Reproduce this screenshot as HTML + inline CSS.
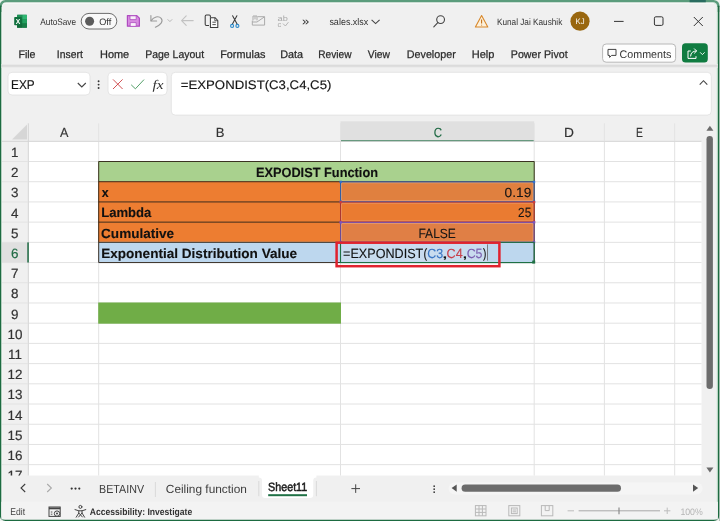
<!DOCTYPE html>
<html lang="en"><head><meta charset="utf-8"><title>sales.xlsx - Excel</title>
<style>html,body{margin:0;padding:0;background:#f4f8f5;overflow:hidden}svg{display:block;will-change:transform}</style>
</head><body>
<svg width="720" height="521" viewBox="0 0 720 521" font-family="'Liberation Sans', sans-serif" text-rendering="geometricPrecision">
<rect x="0" y="0" width="720" height="521" fill="#eef3ef"/>
<rect x="719.2" y="6" width="0.8" height="515" fill="#a9bbb0"/>
<rect x="0" y="0" width="719.2" height="521" rx="5.5" ry="5.5" fill="#f0f0f0"/>
<path d="M1.7 519 V6.5 Q1.7 3.2 5 3.2 H714" fill="none" stroke="#f7fbf8" stroke-width="1"/>
<path d="M714 3.2 Q717 3.2 717 6.5 V517" fill="none" stroke="#d9eee1" stroke-width="1.1"/>
<path d="M0.6 6 V515.5 Q0.6 520.2 5.5 520.2 H713.6 Q718.5 520.2 718.5 515.5 V6" fill="none" stroke="#1d6b41" stroke-width="1.4"/>
<path d="M0.6 7 Q0.6 1.1 6.4 1.1 H712.8 Q718.5 1.1 718.5 7" fill="none" stroke="#5b9c7c" stroke-width="2.3"/>
<path d="M0.6 5.6 V12" fill="none" stroke="#1d6b41" stroke-width="1.4"/>
<path d="M718.5 5.6 V12" fill="none" stroke="#1d6b41" stroke-width="1.4"/>
<path d="M689.6 1.1 H705.8" stroke="#2a6c60" stroke-width="2.3" fill="none"/>
<g><rect x="17" y="14.8" width="10" height="12.9" rx="0.9" fill="#178048"/><rect x="17" y="14.8" width="5.4" height="4.3" fill="#1e9156"/><rect x="22.4" y="14.8" width="4.6" height="4.3" fill="#30b572"/><rect x="22.4" y="19.1" width="4.6" height="4.3" fill="#22a05f"/><rect x="17" y="23.4" width="5.4" height="4.3" fill="#126a3a"/><rect x="22.4" y="23.4" width="4.6" height="4.3" fill="#187d47"/><rect x="14.2" y="17" width="7.6" height="8.3" rx="0.8" fill="#0f6f3d"/></g>
<text x="15.75" y="23.9" font-size="7.4" fill="#fff" font-weight="bold" textLength="4.55" lengthAdjust="spacingAndGlyphs">X</text>
<text x="40.3" y="25" font-size="9.4" fill="#333" textLength="35.78" lengthAdjust="spacingAndGlyphs">AutoSave</text>
<rect x="81.2" y="13.4" width="35.6" height="15.6" rx="7.8" fill="#f9f9f9" stroke="#5e5e5e" stroke-width="0.9"/>
<circle cx="89.6" cy="21.2" r="4.5" fill="#5c5c5c"/>
<text x="99.21" y="25" font-size="9.4" fill="#333" textLength="12.0" lengthAdjust="spacingAndGlyphs">Off</text>
<g stroke-linejoin="round"><path d="M127.4 15.6 H136.8 L139.4 18.2 V26.2 H127.4 Z" fill="#d78be0" stroke="#ae4bc0" stroke-width="1.2"/><rect x="130" y="15.8" width="6.2" height="3.8" fill="#f7eef8" stroke="#ae4bc0" stroke-width="0.8"/><rect x="130.2" y="22.6" width="6" height="3.8" fill="#faf3fb" stroke="#ae4bc0" stroke-width="0.8"/></g>
<g fill="none" stroke="#9a9a9a" stroke-width="1.1" stroke-linecap="round" stroke-linejoin="round"><path d="M150.9 15.6 V21 H156.6"/><path d="M151.2 20.6 C153.4 16.8 158.6 15.4 161.2 18.4 C163.6 21.6 160.6 24.8 155.4 27.2"/><path d="M167.9 19.6 L169.9 21.6 L171.9 19.6" stroke="#b0b0b0" stroke-width="0.9"/></g>
<g fill="none" stroke="#c2c2c2" stroke-width="1.1" stroke-linecap="round" stroke-linejoin="round"><path d="M181.6 20.6 H193.2 M186.2 15.9 L181.6 20.6 L186.2 25.3"/></g>
<g fill="none" stroke="#3b3b3b" stroke-width="1.05" stroke-linejoin="round"><path d="M209 25.4 H206.4 Q205.2 25.4 205.2 24.2 V16.2 Q205.2 15 206.4 15 H209.2 Q210.4 15 210.4 16.2 V17.4"/><path d="M210.4 17.7 H215 L217.8 20.5 V27.5 H210.4 Z" fill="#fbfbfb"/><path d="M214.8 17.9 V20.7 H217.6" stroke-width="0.8"/><path d="M212.4 22.2 H215.8 M212.4 24.6 H215.8" stroke-width="0.9"/></g>
<g fill="none" stroke-linecap="round"><path d="M232.6 15.8 L237.2 24.2 M236.9 15.8 L232.3 24.2" stroke="#3b3b3b" stroke-width="1.05"/><circle cx="232.1" cy="25.9" r="1.5" stroke="#2b88c8" stroke-width="1.1"/><circle cx="237.4" cy="25.9" r="1.5" stroke="#2b88c8" stroke-width="1.1"/></g>
<g fill="none" stroke="#ababab" stroke-width="1"><path d="M257.6 16.7 H264.6 V25.1 H252.3 V20.6"/><path d="M252.3 22 H257 L264.4 16.9"/><path d="M253 20.4 V16 H257 V20.4 M255 16.2 V19.4"/></g>
<text x="277.6" y="20.6" font-size="7.6" fill="#a8a8a8" textLength="10.2" lengthAdjust="spacingAndGlyphs">ab</text>
<text x="277.6" y="27.2" font-size="7.6" fill="#a8a8a8">c</text>
<path d="M283 23.6 L285.4 26 L288.4 22.2" fill="none" stroke="#b5b5b5" stroke-width="1"/>
<text x="301.94" y="25.2" font-size="11.5" fill="#333" textLength="7.22" lengthAdjust="spacingAndGlyphs">»</text>
<text x="329.39" y="25" font-size="9.6" fill="#333" textLength="39.0" lengthAdjust="spacingAndGlyphs">sales.xlsx</text>
<path d="M371.6 19.8 L375.6 23.6 L379.6 19.8" fill="none" stroke="#444" stroke-width="1.1"/>
<g fill="none" stroke="#444" stroke-width="1.1" stroke-linecap="round"><circle cx="440.6" cy="19.6" r="3.9"/><path d="M437.8 22.6 L433.8 26.8"/></g>
<path d="M481.6 15.6 L487.8 27 H475.4 Z" fill="#fdf1dc" stroke="#d8872a" stroke-width="1.1" stroke-linejoin="round"/>
<path d="M481.6 19.4 V23.4 M481.6 24.8 V25.6" stroke="#c4701a" stroke-width="1.1"/>
<text x="496.96" y="24.8" font-size="9.2" fill="#333" textLength="65.29" lengthAdjust="spacingAndGlyphs">Kunal Jai Kaushik</text>
<circle cx="580" cy="21.2" r="9.6" fill="#99670f"/>
<text x="575.56" y="24.2" font-size="8" fill="#fff" textLength="9.04" lengthAdjust="spacingAndGlyphs">KJ</text>
<g fill="none" stroke="#333" stroke-width="1"><path d="M614 21.4 H623.6"/><rect x="654.4" y="16.8" width="8.6" height="8.6" rx="1.4"/><path d="M693.8 17 L702.8 26 M702.8 17 L693.8 26"/></g>
<text x="18.39" y="58.1" font-size="11" fill="#2b2b2b" textLength="17.16" lengthAdjust="spacingAndGlyphs" stroke="#2b2b2b" stroke-width="0.25">File</text>
<text x="56.86" y="58.1" font-size="11" fill="#2b2b2b" textLength="25.96" lengthAdjust="spacingAndGlyphs" stroke="#2b2b2b" stroke-width="0.25">Insert</text>
<text x="99.97" y="58.1" font-size="11" fill="#2b2b2b" textLength="29.24" lengthAdjust="spacingAndGlyphs" stroke="#2b2b2b" stroke-width="0.25">Home</text>
<text x="145.21" y="58.1" font-size="11" fill="#2b2b2b" textLength="58.9" lengthAdjust="spacingAndGlyphs" stroke="#2b2b2b" stroke-width="0.25">Page Layout</text>
<text x="220.18" y="58.1" font-size="11" fill="#2b2b2b" textLength="45.16" lengthAdjust="spacingAndGlyphs" stroke="#2b2b2b" stroke-width="0.25">Formulas</text>
<text x="280.18" y="58.1" font-size="11" fill="#2b2b2b" textLength="22.9" lengthAdjust="spacingAndGlyphs" stroke="#2b2b2b" stroke-width="0.25">Data</text>
<text x="318.23" y="58.1" font-size="11" fill="#2b2b2b" textLength="33.34" lengthAdjust="spacingAndGlyphs" stroke="#2b2b2b" stroke-width="0.25">Review</text>
<text x="367.84" y="58.1" font-size="11" fill="#2b2b2b" textLength="22.15" lengthAdjust="spacingAndGlyphs" stroke="#2b2b2b" stroke-width="0.25">View</text>
<text x="406.79" y="58.1" font-size="11" fill="#2b2b2b" textLength="48.95" lengthAdjust="spacingAndGlyphs" stroke="#2b2b2b" stroke-width="0.25">Developer</text>
<text x="471.76" y="58.1" font-size="11" fill="#2b2b2b" textLength="22.7" lengthAdjust="spacingAndGlyphs" stroke="#2b2b2b" stroke-width="0.25">Help</text>
<text x="510.79" y="58.1" font-size="11" fill="#2b2b2b" textLength="56.84" lengthAdjust="spacingAndGlyphs" stroke="#2b2b2b" stroke-width="0.25">Power Pivot</text>
<rect x="602.6" y="44" width="73" height="18.2" rx="3.5" fill="#fdfdfd" stroke="#b8b8b8" stroke-width="1"/>
<path d="M608 49.4 H616 V55.4 H611.6 L609.6 57.4 V55.4 H608 Z" fill="none" stroke="#444" stroke-width="1" stroke-linejoin="round"/>
<text x="619.51" y="57.6" font-size="11" fill="#333" textLength="51.83" lengthAdjust="spacingAndGlyphs">Comments</text>
<rect x="682" y="43.2" width="25.8" height="19.3" rx="3.5" fill="#107c41"/>
<g fill="none" stroke="#fff" stroke-width="1" stroke-linejoin="round" stroke-linecap="round"><path d="M690.4 51 H688 V58.4 H696 V56.6"/><path d="M690.6 56 C690.8 52.6 693 51 696.4 51 M694.4 48.8 L696.6 51 L694.4 53.2"/><path d="M700.4 52.6 L702.4 54.6 L704.4 52.6" stroke-width="0.9"/></g>
<rect x="1.4" y="64" width="716.4" height="1" fill="#e9e9e9"/>
<rect x="1.4" y="65" width="716.4" height="1.9" fill="#dbdbdb"/>
<rect x="1.4" y="66.9" width="716.4" height="0.9" fill="#eaeaea"/>
<rect x="8" y="72.3" width="82" height="22.7" rx="4" fill="#fff" stroke="#e0e0e0" stroke-width="0.8"/>
<text x="11.06" y="89.4" font-size="12.6" fill="#151515" textLength="23.59" lengthAdjust="spacingAndGlyphs" stroke="#151515" stroke-width="0.15">EXP</text>
<path d="M77.8 83 L81.8 87 L85.8 83" fill="none" stroke="#444" stroke-width="1.1"/>
<circle cx="98.6" cy="81.2" r="0.95" fill="#333"/>
<circle cx="98.6" cy="84.6" r="0.95" fill="#333"/>
<circle cx="98.6" cy="88" r="0.95" fill="#333"/>
<rect x="108" y="72.3" width="59" height="22.7" rx="4" fill="#fff" stroke="#e0e0e0" stroke-width="0.8"/>
<path d="M113 79.4 L122.6 89 M122.6 79.4 L113 89" stroke="#cf4a4c" stroke-width="0.95" fill="none"/>
<path d="M131.2 84.8 L135.4 88.8 L144 79.6" stroke="#4a9a60" stroke-width="0.95" fill="none"/>
<text x="152.6" y="89" font-size="13" fill="#333" textLength="11" lengthAdjust="spacingAndGlyphs" font-style="italic" font-family="'Liberation Serif', serif">fx</text>
<rect x="171.3" y="72.3" width="540" height="42.8" rx="4" fill="#fff" stroke="#e0e0e0" stroke-width="0.8"/>
<text x="180.79" y="89.2" font-size="12.4" fill="#151515" textLength="150.6" lengthAdjust="spacingAndGlyphs" stroke="#151515" stroke-width="0.15">=EXPONDIST(C3,C4,C5)</text>
<path d="M699.7 84.7 L703.5 80.7 L707.3 84.7" fill="none" stroke="#444" stroke-width="1.1"/>
<rect x="28.3" y="141.3" width="673.2" height="334.2" fill="#fff"/>
<rect x="340.5" y="121.3" width="193.70000000000005" height="20.000000000000014" fill="#e0e0e0"/>
<rect x="340.5" y="140.0" width="193.70000000000005" height="1.6" fill="#4d8a6a"/>
<rect x="2" y="242.35000000000002" width="26.3" height="20.21" fill="#e0e0e0"/>
<path d="M28.3 161.51 H701.5 M28.3 181.72 H701.5 M28.3 201.93 H701.5 M28.3 222.14 H701.5 M28.3 242.35 H701.5 M28.3 262.56 H701.5 M28.3 282.77 H701.5 M28.3 302.98 H701.5 M28.3 323.19 H701.5 M28.3 343.4 H701.5 M28.3 363.61 H701.5 M28.3 383.82 H701.5 M28.3 404.03 H701.5 M28.3 424.24 H701.5 M28.3 444.45 H701.5 M28.3 464.66 H701.5 M98.7 141.3 V475.5 M340.5 141.3 V475.5 M534.2 141.3 V475.5 M604.4 141.3 V475.5 M674.7 141.3 V475.5" stroke="#e2e2e2" stroke-width="1" fill="none"/>
<path d="M28.3 123.3 V475.5 M2 141.3 H701.5" stroke="#d4d4d4" stroke-width="1" fill="none"/>
<path d="M98.7 123.3 V141.3 M340.5 123.3 V141.3 M534.2 123.3 V141.3 M604.4 123.3 V141.3 M674.7 123.3 V141.3 M2 161.51 H28.3 M2 181.72 H28.3 M2 201.93 H28.3 M2 222.14 H28.3 M2 242.35 H28.3 M2 262.56 H28.3 M2 282.77 H28.3 M2 302.98 H28.3 M2 323.19 H28.3 M2 343.4 H28.3 M2 363.61 H28.3 M2 383.82 H28.3 M2 404.03 H28.3 M2 424.24 H28.3 M2 444.45 H28.3 M2 464.66 H28.3" stroke="#e3e3e3" stroke-width="1" fill="none"/>
<rect x="27.3" y="242.35000000000002" width="1.5" height="20.21" fill="#1f6a44"/>
<path d="M27 124.4 V139.4 H12 Z" fill="#d6d6d6"/>
<text x="60.0" y="136.5" font-size="13.2" fill="#333" textLength="8.42" lengthAdjust="spacingAndGlyphs" stroke="#333" stroke-width="0.15">A</text>
<text x="215.64" y="136.5" font-size="13.2" fill="#333" textLength="8.73" lengthAdjust="spacingAndGlyphs" stroke="#333" stroke-width="0.15">B</text>
<text x="433.82" y="136.5" font-size="13.2" fill="#1f6a44" textLength="8.35" lengthAdjust="spacingAndGlyphs" stroke="#1f6a44" stroke-width="0.15">C</text>
<text x="564.08" y="136.5" font-size="13.2" fill="#333" textLength="9.95" lengthAdjust="spacingAndGlyphs" stroke="#333" stroke-width="0.15">D</text>
<text x="636.08" y="136.5" font-size="13.2" fill="#333" textLength="6.91" lengthAdjust="spacingAndGlyphs" stroke="#333" stroke-width="0.15">E</text>
<clipPath id="gc"><rect x="0" y="121.3" width="701.5" height="354.2"/></clipPath>
<g clip-path="url(#gc)">
<text x="14.8" y="156.9" font-size="13.4" fill="#333" text-anchor="middle" stroke="#333" stroke-width="0.2">1</text>
<text x="14.8" y="177.1" font-size="13.4" fill="#333" text-anchor="middle" stroke="#333" stroke-width="0.2">2</text>
<text x="14.8" y="197.3" font-size="13.4" fill="#333" text-anchor="middle" stroke="#333" stroke-width="0.2">3</text>
<text x="14.8" y="217.5" font-size="13.4" fill="#333" text-anchor="middle" stroke="#333" stroke-width="0.2">4</text>
<text x="14.8" y="237.7" font-size="13.4" fill="#333" text-anchor="middle" stroke="#333" stroke-width="0.2">5</text>
<text x="14.8" y="258.0" font-size="13.4" fill="#1f6a44" text-anchor="middle" stroke="#1f6a44" stroke-width="0.2">6</text>
<text x="14.8" y="278.2" font-size="13.4" fill="#333" text-anchor="middle" stroke="#333" stroke-width="0.2">7</text>
<text x="14.8" y="298.4" font-size="13.4" fill="#333" text-anchor="middle" stroke="#333" stroke-width="0.2">8</text>
<text x="14.8" y="318.6" font-size="13.4" fill="#333" text-anchor="middle" stroke="#333" stroke-width="0.2">9</text>
<text x="15" y="338.8" font-size="13.4" fill="#333" text-anchor="middle" stroke="#333" stroke-width="0.2">10</text>
<text x="15" y="359.0" font-size="13.4" fill="#333" text-anchor="middle" stroke="#333" stroke-width="0.2">11</text>
<text x="15" y="379.2" font-size="13.4" fill="#333" text-anchor="middle" stroke="#333" stroke-width="0.2">12</text>
<text x="15" y="399.4" font-size="13.4" fill="#333" text-anchor="middle" stroke="#333" stroke-width="0.2">13</text>
<text x="15" y="419.6" font-size="13.4" fill="#333" text-anchor="middle" stroke="#333" stroke-width="0.2">14</text>
<text x="15" y="439.8" font-size="13.4" fill="#333" text-anchor="middle" stroke="#333" stroke-width="0.2">15</text>
<text x="15" y="460.1" font-size="13.4" fill="#333" text-anchor="middle" stroke="#333" stroke-width="0.2">16</text>
<text x="15" y="480.3" font-size="13.4" fill="#333" text-anchor="middle" stroke="#333" stroke-width="0.2">17</text>
</g>
<rect x="98.2" y="161.01" width="436.5" height="21.21" fill="#a9d18e"/>
<rect x="98.2" y="181.22" width="242.8" height="21.21" fill="#ed7d31"/>
<rect x="340.0" y="181.22" width="194.7" height="21.21" fill="#e0803f"/>
<rect x="98.2" y="201.43" width="242.8" height="21.21" fill="#ed7d31"/>
<rect x="340.0" y="201.43" width="194.7" height="21.21" fill="#ea7b31"/>
<rect x="98.2" y="221.64" width="242.8" height="21.21" fill="#ed7d31"/>
<rect x="340.0" y="221.64" width="194.7" height="21.21" fill="#e07f45"/>
<rect x="98.2" y="241.85" width="242.8" height="21.21" fill="#bdd7ee"/>
<rect x="340.0" y="241.85" width="194.7" height="21.21" fill="#bdd7ee"/>
<rect x="341.5" y="243.35" width="146" height="18.21" fill="#c9dcef"/>
<rect x="98.2" y="302.48" width="242.8" height="21.21" fill="#70ad47"/>
<path d="M98.7 161.51 H534.2 M98.7 181.72 H534.2 M98.7 201.93 H534.2 M98.7 222.14 H534.2 M98.7 242.35 H534.2 M98.7 262.56 H534.2 M98.7 161.51 V262.56 M534.2 161.51 V262.56 M340.5 181.72 V262.56" stroke="#35291c" stroke-width="0.95" fill="none"/>
<rect x="340.7" y="181.92" width="193.3" height="19.81" fill="none" stroke="#2f6fd0" stroke-width="0.9"/>
<rect x="341.7" y="182.92" width="191.3" height="17.81" fill="none" stroke="#f3e6dc" stroke-width="0.6" opacity="0.4"/>
<rect x="339.5" y="180.72" width="2.4" height="2.4" fill="#2f6fd0"/>
<rect x="532.8" y="180.72" width="2.4" height="2.4" fill="#2f6fd0"/>
<rect x="339.5" y="200.53" width="2.4" height="2.4" fill="#2f6fd0"/>
<rect x="532.8" y="200.53" width="2.4" height="2.4" fill="#2f6fd0"/>
<rect x="340.7" y="202.13" width="193.3" height="19.81" fill="none" stroke="#d03a3a" stroke-width="0.9"/>
<rect x="341.7" y="203.13" width="191.3" height="17.81" fill="none" stroke="#f3e6dc" stroke-width="0.6" opacity="0.4"/>
<rect x="339.5" y="200.93" width="2.4" height="2.4" fill="#d03a3a"/>
<rect x="532.8" y="200.93" width="2.4" height="2.4" fill="#d03a3a"/>
<rect x="339.5" y="220.74" width="2.4" height="2.4" fill="#d03a3a"/>
<rect x="532.8" y="220.74" width="2.4" height="2.4" fill="#d03a3a"/>
<rect x="340.7" y="222.34" width="193.3" height="19.81" fill="none" stroke="#7a55c0" stroke-width="0.9"/>
<rect x="341.7" y="223.34" width="191.3" height="17.81" fill="none" stroke="#f3e6dc" stroke-width="0.6" opacity="0.4"/>
<rect x="339.5" y="221.14" width="2.4" height="2.4" fill="#7a55c0"/>
<rect x="532.8" y="221.14" width="2.4" height="2.4" fill="#7a55c0"/>
<rect x="339.5" y="240.95" width="2.4" height="2.4" fill="#7a55c0"/>
<rect x="532.8" y="240.95" width="2.4" height="2.4" fill="#7a55c0"/>
<rect x="340.5" y="242.35" width="193.70000000000005" height="20.21" fill="none" stroke="#1f7145" stroke-width="1.1"/>
<rect x="532.2" y="260.56" width="3" height="3" fill="#1f7145"/>
<text x="255.9" y="177.0" font-size="13.3" fill="#111" font-weight="bold" textLength="122.1" lengthAdjust="spacingAndGlyphs" stroke="#111" stroke-width="0.12">EXPODIST Function</text>
<text x="101.85" y="197.2" font-size="13.3" fill="#111" font-weight="bold" textLength="6.88" lengthAdjust="spacingAndGlyphs" stroke="#111" stroke-width="0.12">x</text>
<text x="101.18" y="217.4" font-size="13.3" fill="#111" font-weight="bold" textLength="50.21" lengthAdjust="spacingAndGlyphs" stroke="#111" stroke-width="0.12">Lambda</text>
<text x="101.09" y="237.6" font-size="13.3" fill="#111" font-weight="bold" textLength="73.04" lengthAdjust="spacingAndGlyphs" stroke="#111" stroke-width="0.12">Cumulative</text>
<text x="101.15" y="257.9" font-size="13.3" fill="#111" font-weight="bold" textLength="195.99" lengthAdjust="spacingAndGlyphs" stroke="#111" stroke-width="0.12">Exponential Distribution Value</text>
<text x="504.58" y="197.2" font-size="13.3" fill="#151515" textLength="26.69" lengthAdjust="spacingAndGlyphs" stroke="#151515" stroke-width="0.1">0.19</text>
<text x="518.11" y="217.4" font-size="13.3" fill="#151515" textLength="13.15" lengthAdjust="spacingAndGlyphs" stroke="#151515" stroke-width="0.1">25</text>
<text x="418.44" y="237.6" font-size="13.3" fill="#151515" textLength="37.46" lengthAdjust="spacingAndGlyphs" stroke="#151515" stroke-width="0.1">FALSE</text>
<text x="343.12" y="257.9" font-size="13.3" fill="#111" textLength="80.14" lengthAdjust="spacingAndGlyphs" stroke="#111" stroke-width="0.12">=EXPONDIST</text>
<text x="423.41" y="257.9" font-size="13.3" fill="#111" textLength="3.68" lengthAdjust="spacingAndGlyphs" stroke="#111" stroke-width="0.12">(</text>
<text x="427.27" y="257.9" font-size="13.3" fill="#3a76c4" textLength="15.95" lengthAdjust="spacingAndGlyphs" stroke="#3a76c4" stroke-width="0.12">C3</text>
<text x="441.78" y="257.9" font-size="13.3" fill="#111" textLength="6.25" lengthAdjust="spacingAndGlyphs" stroke="#111" stroke-width="0.12">,</text>
<text x="446.61" y="257.9" font-size="13.3" fill="#c8414b" textLength="16.2" lengthAdjust="spacingAndGlyphs" stroke="#c8414b" stroke-width="0.12">C4</text>
<text x="462.06" y="257.9" font-size="13.3" fill="#111" textLength="5.83" lengthAdjust="spacingAndGlyphs" stroke="#111" stroke-width="0.12">,</text>
<text x="466.63" y="257.9" font-size="13.3" fill="#7b5fb0" textLength="15.9" lengthAdjust="spacingAndGlyphs" stroke="#7b5fb0" stroke-width="0.12">C5</text>
<text x="482.97" y="257.9" font-size="13.3" fill="#111" textLength="3.36" lengthAdjust="spacingAndGlyphs" stroke="#111" stroke-width="0.12">)</text>
<path d="M487.5 244.4 V260.6" stroke="#666" stroke-width="0.8"/>
<rect x="336.6" y="242.7" width="162.8" height="23.5" fill="none" stroke="#e0222e" stroke-width="2.5"/>
<path d="M706.4 130.8 L709.9 125.8 L713.4 130.8 Z" fill="#6b6b6b"/>
<rect x="706.5" y="136" width="6.4" height="253" rx="3.2" fill="#6c6c6c"/>
<path d="M706.4 467.6 L713.4 467.6 L709.9 472.6 Z" fill="#6b6b6b"/>
<path d="M25.2 484 L21 488 L25.2 492" fill="none" stroke="#3a3a3a" stroke-width="1.05"/>
<path d="M47.2 484 L51.4 488 L47.2 492" fill="none" stroke="#a8a8a8" stroke-width="1.05"/>
<circle cx="71.7" cy="488.6" r="1.1" fill="#333"/>
<circle cx="75.5" cy="488.6" r="1.1" fill="#333"/>
<circle cx="79.3" cy="488.6" r="1.1" fill="#333"/>
<text x="99.09" y="493.4" font-size="11.8" fill="#3d3d3d" textLength="45.01" lengthAdjust="spacingAndGlyphs">BETAINV</text>
<path d="M155.4 482 V497" stroke="#d9d9d9" stroke-width="1"/>
<text x="165.83" y="493.4" font-size="11.8" fill="#3d3d3d" textLength="81.01" lengthAdjust="spacingAndGlyphs">Ceiling function</text>
<path d="M258.8 474.6 H316.4 V477.6 Q313.2 477.6 313.2 480.8 V494.8 Q313.2 498 310 498 H265.2 Q262 498 262 494.8 V480.8 Q262 477.6 258.8 477.6 Z" fill="#fff"/>
<text x="268.05" y="491" font-size="12" fill="#1d1d1d" textLength="39.24" lengthAdjust="spacingAndGlyphs" stroke="#1d1d1d" stroke-width="0.5">Sheet11</text>
<rect x="268.2" y="494.2" width="38.8" height="2" fill="#1f7145"/>
<path d="M258.8 481 V496.2" stroke="#d9d9d9" stroke-width="1"/>
<path d="M316.4 481 V496.2" stroke="#d9d9d9" stroke-width="1"/>
<path d="M351.4 488.6 H360 M355.7 484.3 V492.9" stroke="#444" stroke-width="1"/>
<rect x="433.4" y="485.4" width="1.6" height="1.6" fill="#444"/>
<rect x="433.4" y="488.4" width="1.6" height="1.6" fill="#444"/>
<rect x="433.4" y="491.4" width="1.6" height="1.6" fill="#444"/>
<rect x="448.6" y="482.6" width="254" height="12" rx="6" fill="#f5f5f5"/>
<path d="M456.7 484.4 V491.8 L451.6 488.1 Z" fill="#555"/>
<rect x="461.6" y="484.6" width="159.4" height="7.2" rx="3.6" fill="#6c6c6c"/>
<path d="M693 484.4 V491.8 L698.2 488.1 Z" fill="#555"/>
<rect x="1.3" y="501.8" width="716.6" height="17.7" fill="#f3f3f3"/>
<text x="10.27" y="515.2" font-size="9.8" fill="#444" textLength="14.78" lengthAdjust="spacingAndGlyphs">Edit</text>
<g fill="none" stroke="#444" stroke-width="1"><rect x="49" y="507" width="11.2" height="9.4"/><path d="M49 508.4 H60.2" stroke-width="1.8"/><path d="M50.8 512 H52.4 M50.8 514.2 H52.4" stroke-width="0.9"/><circle cx="57" cy="513.6" r="2.7" fill="#f3f3f3"/><circle cx="57" cy="513.6" r="1" fill="#444" stroke="none"/></g>
<g fill="none" stroke="#444" stroke-width="1" stroke-linecap="round" stroke-linejoin="round"><circle cx="80.4" cy="506.9" r="1.5"/><path d="M75 509.6 L78.8 510.8 H82 L85.8 509.6 M78.8 510.8 V513 L76.2 517.2 M82 510.8 V513 L84.6 517.2 M78.8 513 L82.4 517 M82 513 L78.6 517"/></g>
<text x="89.7" y="515.2" font-size="9.6" fill="#333" font-weight="bold" textLength="102.57" lengthAdjust="spacingAndGlyphs">Accessibility: Investigate</text>
<g fill="none" stroke="#b9b9b9" stroke-width="1"><rect x="475.4" y="505.6" width="10.6" height="10.2"/><path d="M475.4 509 H486 M475.4 512.4 H486 M479 505.6 V515.8 M482.4 505.6 V515.8"/><rect x="508.8" y="505.6" width="11" height="10.2"/><rect x="511.4" y="508" width="5.8" height="5.6"/><path d="M512.6 510 H516 M512.6 511.8 H516"/><rect x="541.4" y="505.6" width="11.4" height="10.2"/><path d="M545.2 505.6 V510.6 H549.2 V505.6"/></g>
<path d="M567.6 510.8 H574" stroke="#bdbdbd" stroke-width="1"/>
<path d="M578.6 510.8 H660" stroke="#a9a9a9" stroke-width="1"/>
<path d="M619 507.4 V514.2" stroke="#8c8c8c" stroke-width="1.2"/>
<path d="M664 510.8 H670.4 M667.2 507.6 V514" stroke="#bdbdbd" stroke-width="1"/>
<text x="680.38" y="514.6" font-size="9.4" fill="#b5b5b5" textLength="22.42" lengthAdjust="spacingAndGlyphs">100%</text>
</svg>
</body></html>
